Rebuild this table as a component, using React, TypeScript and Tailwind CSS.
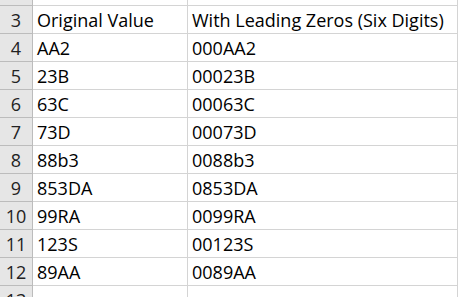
import React from "react";

const rows = [
  ["3", "Original Value", "With Leading Zeros (Six Digits)"],
  ["4", "AA2", "000AA2"],
  ["5", "23B", "00023B"],
  ["6", "63C", "00063C"],
  ["7", "73D", "00073D"],
  ["8", "88b3", "0088b3"],
  ["9", "853DA", "0853DA"],
  ["10", "99RA", "0099RA"],
  ["11", "123S", "00123S"],
  ["12", "89AA", "0089AA"],
  ["13", "", ""],
];

const Row = ({ num, a, b, h }: { num: string; a: string; b: string; h: string }) => (
  <div className={`flex ${h}`}>
    <div className="w-[33px] shrink-0 bg-[#e6e6e6] border-r border-b border-[#bcbcbc] flex items-end justify-center pb-[4px] text-[#222]">
      {num}
    </div>
    <div className="w-[155px] shrink-0 border-r border-b border-[#d4d4d4] flex items-end pl-[4px] pb-[4px]">{a}</div>
    <div className="w-[270px] shrink-0 border-r border-b border-[#d4d4d4] flex items-end pl-[4px] pb-[4px]">{b}</div>
  </div>
);

export default function App() {
  return (
    <div
      className="w-[458px] h-[297px] overflow-hidden bg-white text-black text-[18px] leading-none"
      style={{ fontFamily: "'Open Sans', sans-serif" }}
    >
      <Row num="" a="" b="" h="h-[6px]" />
      {rows.map((r) => (
        <Row key={r[0]} num={r[0]} a={r[1]} b={r[2]} h="h-[28px]" />
      ))}
    </div>
  );
}
